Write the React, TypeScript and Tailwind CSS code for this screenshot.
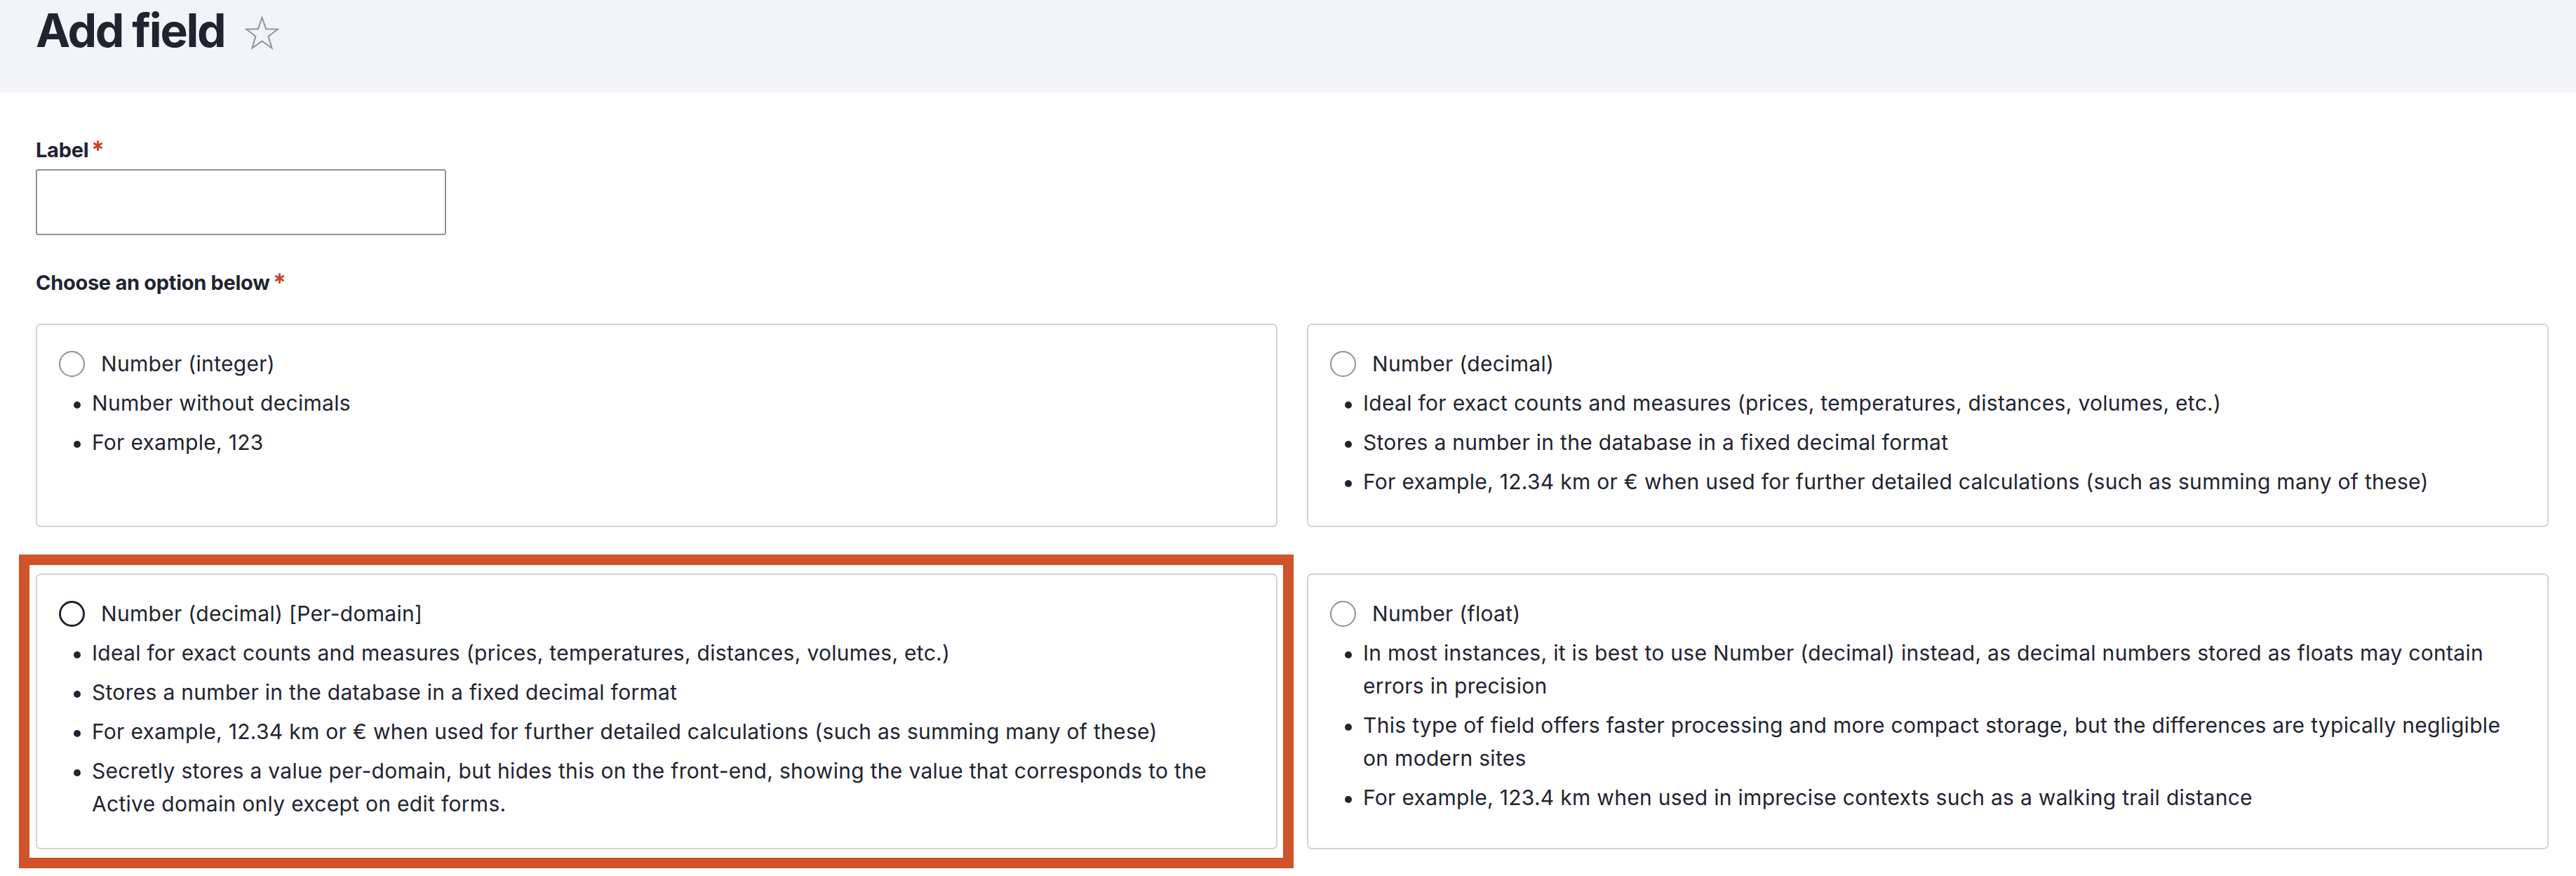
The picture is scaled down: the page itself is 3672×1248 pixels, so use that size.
import React from "react";

type FieldOption = {
  title: string;
  items: string[];
  selected?: boolean;
  highlight?: boolean;
};

const options: FieldOption[] = [
  {
    title: "Number (integer)",
    items: ["Number without decimals", "For example, 123"],
  },
  {
    title: "Number (decimal)",
    items: [
      "Ideal for exact counts and measures (prices, temperatures, distances, volumes, etc.)",
      "Stores a number in the database in a fixed decimal format",
      "For example, 12.34 km or € when used for further detailed calculations (such as summing many of these)",
    ],
  },
  {
    title: "Number (decimal) [Per-domain]",
    highlight: true,
    items: [
      "Ideal for exact counts and measures (prices, temperatures, distances, volumes, etc.)",
      "Stores a number in the database in a fixed decimal format",
      "For example, 12.34 km or € when used for further detailed calculations (such as summing many of these)",
      "Secretly stores a value per-domain, but hides this on the front-end, showing the value that corresponds to the Active domain only except on edit forms.",
    ],
  },
  {
    title: "Number (float)",
    items: [
      "In most instances, it is best to use Number (decimal) instead, as decimal numbers stored as floats may contain errors in precision",
      "This type of field offers faster processing and more compact storage, but the differences are typically negligible on modern sites",
      "For example, 123.4 km when used in imprecise contexts such as a walking trail distance",
    ],
  },
];

function Required() {
  return (
    <svg
      width="13"
      height="15"
      viewBox="0 0 13 15"
      className="ml-[7px] mb-[14px] shrink-0"
      aria-hidden
    >
      <g stroke="#c8432a" strokeWidth="3" strokeLinecap="round">
        <line x1="6.5" y1="1.5" x2="6.5" y2="13.5" />
        <line x1="1.5" y1="4.5" x2="11.5" y2="10.5" />
        <line x1="1.5" y1="10.5" x2="11.5" y2="4.5" />
      </g>
    </svg>
  );
}

function OptionCard({ option }: { option: FieldOption }) {
  const card = (
    <div className="h-full rounded-[7px] border-2 border-[#d3d4d9] bg-white pl-[31px] pr-[31px] pt-[32px] pb-[39px]">
      <label className="flex h-[47px] items-center">
        <span
          className={
            option.highlight
              ? "h-[37px] w-[37px] shrink-0 rounded-full border-[3px] border-[#222330]"
              : "h-[37px] w-[37px] shrink-0 rounded-full border-2 border-[#8e929c]"
          }
        />
        <span className="ml-[23px] text-[30px] leading-[47px] tracking-[0.01em]">
          {option.title}
        </span>
      </label>
      <ul>
        {option.items.map((item) => (
          <li key={item} className="mt-[9px] flex items-start">
            <span className="mt-[21px] ml-[21px] h-[10px] w-[10px] shrink-0 rounded-full bg-[#222330]" />
            <span className="ml-[16px] text-[30px] leading-[47px] tracking-[0.01em]">
              {item}
            </span>
          </li>
        ))}
      </ul>
    </div>
  );

  if (!option.highlight) return card;

  return (
    <div className="relative h-full">
      {card}
      <div className="pointer-events-none absolute -left-[24px] -right-[23px] -top-[27px] -bottom-[27px] border-[15px] border-[#d0532a]" />
    </div>
  );
}

export default function App() {
  return (
    <div className="min-h-screen bg-white text-[#222330] font-['Inter',sans-serif]">
      <header className="bg-[#f3f4f9] pl-[51px] pt-[3px] pb-[49px]">
        <h1 className="flex items-center text-[66px] font-bold leading-[80px] tracking-[-0.035em]">
          Add field
          <svg
            width="49"
            height="48"
            viewBox="0 0 49 48"
            className="ml-[29px] mt-[8px]"
            aria-hidden
          >
            <polygon
              points="24.5,2 30.2,18.3 47,18.6 33.6,28.8 38.5,45.5 24.5,35.5 10.5,45.5 15.4,28.8 2,18.6 18.8,18.3"
              fill="none"
              stroke="#8e929c"
              strokeWidth="2"
              strokeLinejoin="miter"
            />
          </svg>
        </h1>
      </header>

      <main className="pl-[51px] pr-[39px] pt-[64px] pb-[40px]">
        <div className="flex items-center text-[29px] font-bold leading-[36px] tracking-[-0.01em]">
          Label
          <Required />
        </div>
        <input
          type="text"
          className="mt-[9px] block h-[94px] w-[585px] rounded-[3px] border-2 border-[#8e929c] bg-white"
        />

        <div className="mt-[50px] flex items-center text-[29px] font-bold leading-[36px] tracking-[-0.01em]">
          Choose an option below
          <Required />
        </div>

        <div className="mt-[40px] grid grid-cols-2 gap-x-[42px] gap-y-[66px]">
          {options.map((option) => (
            <OptionCard key={option.title} option={option} />
          ))}
        </div>
      </main>
    </div>
  );
}
